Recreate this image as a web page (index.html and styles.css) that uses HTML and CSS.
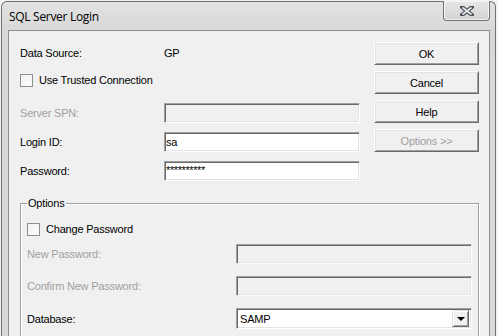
FILE: index.html
```html
<!DOCTYPE html>
<html lang="en">
<head>
    <meta charset="UTF-8">
    <meta name="viewport" content="width=device-width, initial-scale=1.0">
    <title>SQL Server Login</title>
    <link rel="stylesheet" href="styles.css">
</head>
<body>
<div class="window">
    <div class="titlebar">
        <span class="title">SQL Server Login</span>
        <button class="close-btn" type="button" aria-label="Close">
            <svg width="14" height="10" viewBox="0 0 14 10">
                <path d="M2 1 L12 9 M12 1 L2 9" stroke="#4a4f57" stroke-width="4" stroke-linecap="square"/>
                <path d="M2.5 1.5 L11.5 8.5 M11.5 1.5 L2.5 8.5" stroke="#e8eaee" stroke-width="1.6" stroke-linecap="butt"/>
            </svg>
        </button>
    </div>
    <div class="client">
        <div class="top">
            <div class="fields">
                <div class="row row-source">
                    <span class="label">Data Source:</span>
                    <span class="value">GP</span>
                </div>
                <label class="row row-check">
                    <input type="checkbox" class="check">
                    <span>Use Trusted Connection</span>
                </label>
                <div class="row row-spn">
                    <span class="label disabled">Server SPN:</span>
                    <input type="text" class="field" disabled>
                </div>
                <div class="row row-field">
                    <span class="label">Login ID:</span>
                    <input type="text" class="field" value="sa">
                </div>
                <div class="row row-field">
                    <span class="label">Password:</span>
                    <input type="text" class="field pass" value="**********">
                </div>
            </div>
            <div class="buttons">
                <button class="btn" type="button">OK</button>
                <button class="btn" type="button">Cancel</button>
                <button class="btn" type="button">Help</button>
                <button class="btn" type="button" disabled>Options &gt;&gt;</button>
            </div>
        </div>
        <fieldset class="options">
            <legend>Options</legend>
            <label class="row opt-check">
                <input type="checkbox" class="check">
                <span>Change Password</span>
            </label>
            <div class="row opt-new">
                <span class="opt-label disabled">New Password:</span>
                <input type="text" class="field wide" disabled>
            </div>
            <div class="row opt-confirm">
                <span class="opt-label disabled">Confirm New Password:</span>
                <input type="text" class="field wide" disabled>
            </div>
            <div class="row opt-db">
                <span class="opt-label">Database:</span>
                <div class="combo">
                    <span class="combo-text">SAMP</span>
                    <span class="combo-btn"><span class="arrow"></span></span>
                </div>
            </div>
        </fieldset>
    </div>
</div>
</body>
</html>
```

FILE: styles.css
```css
body {
    margin: 0;
    padding: 1px 0 0 1px;
    background-color: #f2f2f2;
    font-family: "Liberation Sans", Arial, sans-serif;
    font-size: 11px;
    letter-spacing: -0.2px;
    color: #000;
    height: 336px;
    overflow: hidden;
    box-sizing: border-box;
}
.window {
    width: 495px;
    height: 335px;
    box-sizing: border-box;
    border: 1px solid #6f7378;
    border-bottom: none;
    border-radius: 6px 6px 0 0;
    background: linear-gradient(#e2e2e2, #d8d8d8 30px, #d9d9d9);
    padding: 0 5px 0 6px;
    display: flex;
    flex-direction: column;
}
.titlebar {
    height: 28px;
    flex: none;
    display: flex;
    align-items: flex-start;
}
.title {
    font-family: "Open Sans", "Noto Sans", sans-serif;
    font-size: 12px;
    letter-spacing: -0.3px;
    line-height: 16px;
    margin: 7px 0 0 1px;
    color: #000;
}
.close-btn {
    margin: -1px 0 0 auto;
    width: 47px;
    height: 20px;
    padding: 0;
    border: 1px solid #6f747c;
    border-top: none;
    border-radius: 0 0 4px 4px;
    background: linear-gradient(#e6e6e6, #d3d3d3);
    box-shadow: inset 0 0 0 1px #f4f4f4;
    display: flex;
    align-items: center;
    justify-content: center;
}
.client {
    flex: 1;
    overflow: hidden;
    border: 1px solid #8b8e92;
    border-bottom: none;
    background-color: #f0f0f0;
    padding: 11px 10px 0 11px;
}
.top {
    display: flex;
    gap: 14px;
    align-items: flex-start;
}
.fields {
    width: 340px;
    display: flex;
    flex-direction: column;
}
.row {
    display: flex;
    align-items: center;
    height: 20px;
}
.row-source {
    margin-top: 1px;
}
.row-check {
    margin-top: 7px;
}
.row-spn {
    margin-top: 13px;
}
.row-field {
    margin-top: 9px;
}
.label {
    width: 144px;
    flex: none;
}
.disabled {
    color: #a0a0a0;
}
.check {
    appearance: none;
    -webkit-appearance: none;
    width: 13px;
    height: 13px;
    margin: 0 6px 0 0;
    box-sizing: border-box;
    border: 1px solid #8e8f8f;
    background: linear-gradient(135deg, #f0f0f0, #ffffff);
    box-shadow: inset 0 0 0 1px #f6f6f6;
}
.field {
    width: 196px;
    height: 20px;
    box-sizing: border-box;
    margin: 0;
    padding: 0 1px;
    font-family: "Liberation Sans", Arial, sans-serif;
    font-size: 11px;
    letter-spacing: -0.2px;
    color: #000;
    background-color: #fff;
    border: 1px solid;
    border-color: #a0a0a0 #fff #fff #a0a0a0;
    box-shadow: inset 1px 1px #696969, inset -1px -1px #e3e3e3;
    outline: none;
}
.field:disabled {
    background-color: #f0f0f0;
}
.pass {
    letter-spacing: -0.4px;
    padding-bottom: 3px;
}
.buttons {
    width: 105px;
    display: flex;
    flex-direction: column;
    gap: 6px;
}
.btn {
    height: 23px;
    margin: 0;
    padding: 0;
    font-family: "Liberation Sans", Arial, sans-serif;
    font-size: 11px;
    letter-spacing: -0.2px;
    color: #000;
    background-color: #f0f0f0;
    border: 1px solid;
    border-color: #fff #696969 #696969 #fff;
    box-shadow: inset 1px 1px #e3e3e3, inset -1px -1px #a0a0a0;
}
.btn:disabled {
    color: #a0a0a0;
}
.options {
    margin: 16px 0 0;
    padding: 0 6px 10px;
    border: 1px solid #a0a0a0;
    box-shadow: inset 1px 1px #fff, 1px 1px #fff;
}
.options legend {
    padding: 0 1px;
    line-height: 13px;
}
.opt-check {
    margin-top: 9px;
}
.opt-new {
    margin-top: 5px;
}
.opt-confirm {
    margin-top: 12px;
}
.opt-db {
    margin-top: 12px;
    height: 21px;
}
.opt-label {
    width: 209px;
    flex: none;
}
.wide {
    width: 236px;
}
.combo {
    width: 236px;
    height: 21px;
    box-sizing: border-box;
    display: flex;
    align-items: center;
    background-color: #fff;
    border: 1px solid;
    border-color: #a0a0a0 #fff #fff #a0a0a0;
    box-shadow: inset 1px 1px #696969, inset -1px -1px #e3e3e3;
    padding: 2px 2px 2px 3px;
}
.combo-text {
    flex: 1;
}
.combo-btn {
    width: 17px;
    height: 17px;
    box-sizing: border-box;
    background-color: #f0f0f0;
    border: 1px solid;
    border-color: #e3e3e3 #696969 #696969 #e3e3e3;
    box-shadow: inset 1px 1px #fff, inset -1px -1px #a0a0a0;
    display: flex;
    align-items: center;
    justify-content: center;
}
.arrow {
    width: 0;
    height: 0;
    border-left: 4px solid transparent;
    border-right: 4px solid transparent;
    border-top: 4px solid #000;
    margin-top: 1px;
}
```
